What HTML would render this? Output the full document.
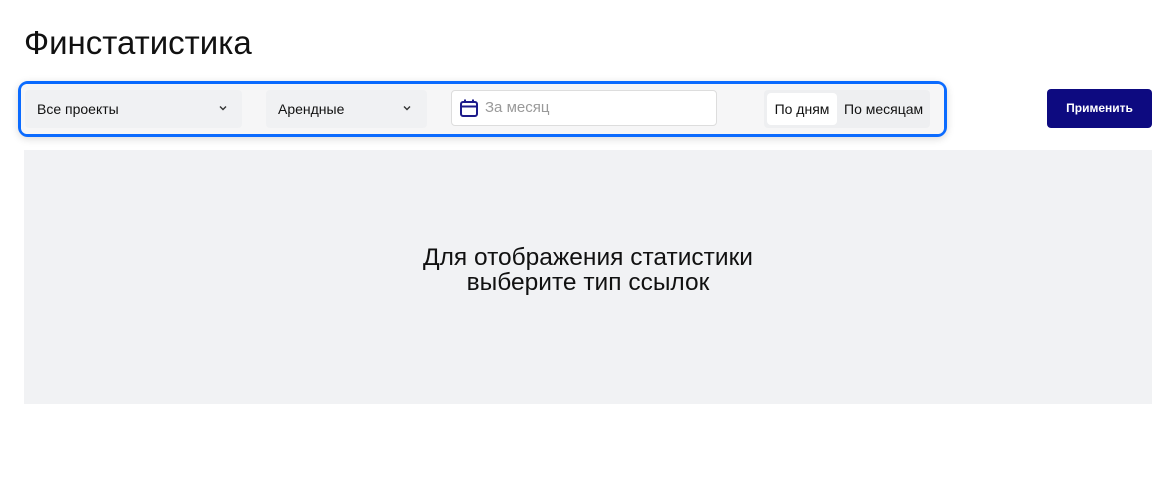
<!DOCTYPE html>
<html><head><meta charset="utf-8"><style>
*{box-sizing:border-box;margin:0;padding:0}
body{width:1176px;height:479px;background:#fff;font-family:"Liberation Sans",sans-serif;position:relative;overflow:hidden;color:#111}
.abs{position:absolute}
h1{position:absolute;left:24px;top:24px;font-size:33px;font-weight:400;color:#111}
.frame{left:18px;top:81px;width:929px;height:56px;border:3px solid #0b6bff;border-radius:10px;background:#e9eaec;box-shadow:0 2px 8px rgba(0,0,0,.15)}
.inner{left:21px;top:84px;width:923px;height:50px;background:#f6f6f7;border-radius:6px}
.sel{background:#f0f1f3;height:38px;top:90px;font-size:14px;line-height:38px;padding-left:12px;border-radius:4px}
.chev{position:absolute;top:15px}
.date{left:451px;top:90px;width:266px;height:36px;background:#fff;border:1px solid #ddd;border-radius:4px}
.tg{left:764px;top:90px;width:166px;height:38px;background:#eeeff1;border-radius:4px}
.tb{top:93px;height:32px;line-height:32px;font-size:14px}
.btn{left:1047px;top:89px;width:105px;height:39px;background:#0d0a80;border-radius:4px;color:#fff;font-size:12px;font-weight:700;text-align:center;line-height:39px}
.gray{left:24px;top:150px;width:1128px;height:254px;background:#f1f2f4}
.msg{left:24px;top:245px;width:1128px;text-align:center;font-size:24.5px;line-height:25px;color:#111}
</style></head><body>
<h1>Финстатистика</h1>
<div class="abs frame"></div>
<div class="abs inner"></div>
<div class="abs sel" style="left:25px;width:217px">Все проекты<svg class="chev" style="left:194px" width="8" height="6" viewBox="0 0 8 6" fill="none" stroke="#333" stroke-width="1.4"><path d="M1 1.5l3 3 3-3"/></svg></div>
<div class="abs sel" style="left:266px;width:161px">Арендные<svg class="chev" style="left:137px" width="8" height="6" viewBox="0 0 8 6" fill="none" stroke="#333" stroke-width="1.4"><path d="M1 1.5l3 3 3-3"/></svg></div>
<div class="abs date">
<svg class="abs" style="left:7px;top:7px" width="20" height="20" viewBox="0 0 20 20" fill="none" stroke="#1c1a8a" stroke-width="2"><rect x="2" y="4" width="16" height="14" rx="2"/><line x1="2" y1="8.5" x2="18" y2="8.5"/><line x1="6" y1="1.5" x2="6" y2="5"/><line x1="14" y1="1.5" x2="14" y2="5"/></svg>
<span class="abs" style="left:33px;top:8px;font-size:15px;color:#9a9a9a">За месяц</span></div>
<div class="abs tg"></div>
<div class="abs tb" style="left:767px;width:70px;background:#fff;border-radius:4px;text-align:center">По дням</div>
<div class="abs tb" style="left:844px">По месяцам</div>
<div class="abs btn">Применить</div>
<div class="abs gray"></div>
<div class="abs msg">Для отображения статистики<br>выберите тип ссылок</div>
</body></html>
